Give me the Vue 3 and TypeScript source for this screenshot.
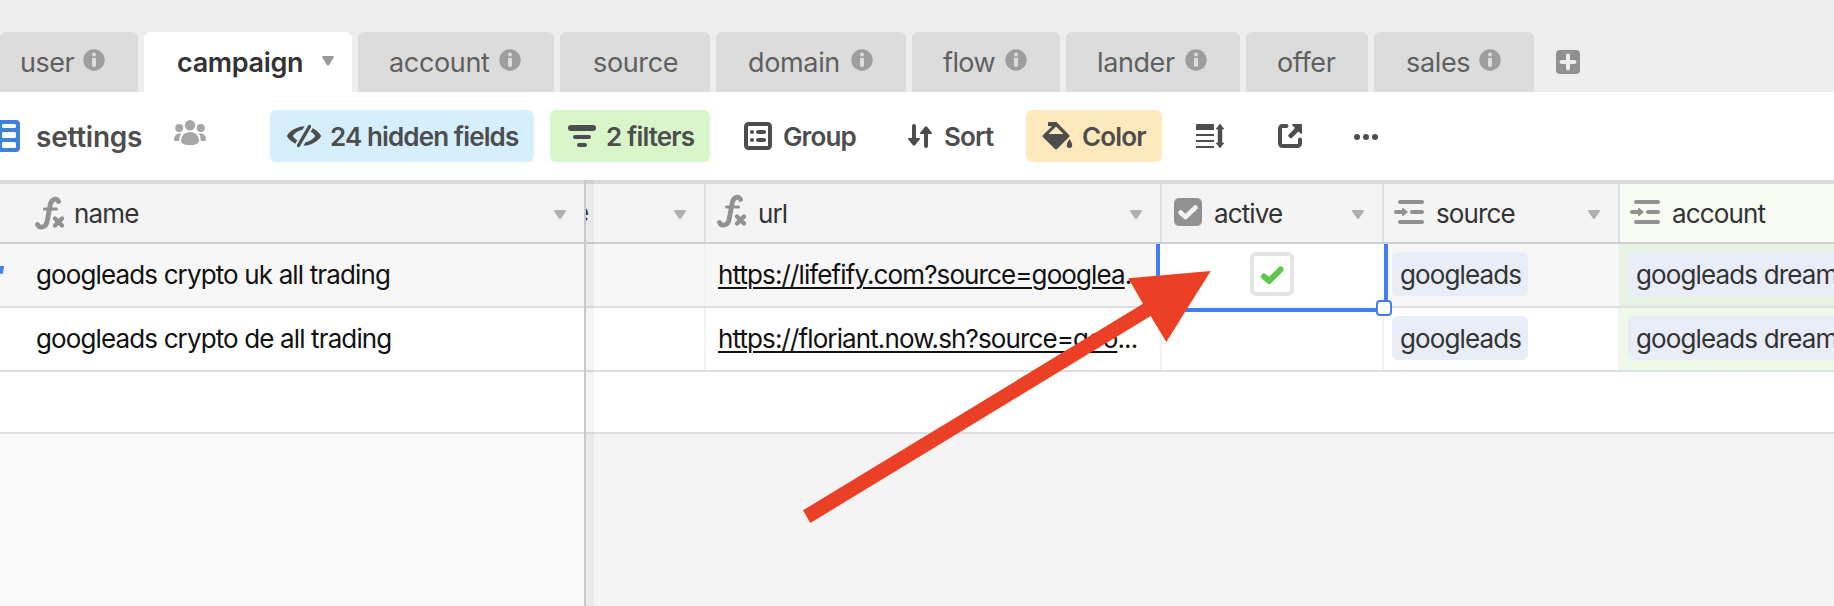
<script setup lang="ts">
interface Tab { name: string; info?: boolean; active?: boolean; cls: string }

const tabs: Tab[] = [
  { name: 'user', info: true, cls: 't-user' },
  { name: 'campaign', active: true, cls: 't-campaign' },
  { name: 'account', info: true, cls: 't-account' },
  { name: 'source', cls: 't-source' },
  { name: 'domain', info: true, cls: 't-domain' },
  { name: 'flow', info: true, cls: 't-flow' },
  { name: 'lander', info: true, cls: 't-lander' },
  { name: 'offer', cls: 't-offer' },
  { name: 'sales', info: true, cls: 't-sales' },
]

interface Row { name: string; url: string; active: boolean; source: string; account: string }

const rows: Row[] = [
  { name: 'googleads crypto uk all trading', url: 'https://lifefify.com?source=googlea', active: true, source: 'googleads', account: 'googleads dream' },
  { name: 'googleads crypto de all trading', url: 'https://floriant.now.sh?source=goo', active: false, source: 'googleads', account: 'googleads dream' },
]
</script>

<template>
  <div class="app">
    <nav class="tabs">
      <div v-for="t in tabs" :key="t.name" class="tab" :class="[t.cls, { current: t.active }]">
        <span class="label">{{ t.name }}</span>
        <svg v-if="t.info" class="info" width="22" height="22" viewBox="0 0 22 22">
          <circle cx="11" cy="11" r="10.7" fill="#9d9d9d" />
          <circle cx="11" cy="5.6" r="2" fill="#dcdcdc" />
          <path d="M9 9h4v8.6h-4z" fill="#dcdcdc" />
        </svg>
        <svg v-if="t.active" class="caret" width="12" height="10" viewBox="0 0 12 10">
          <path d="M1 0h10c.9 0 1.2.8.8 1.500L7 9c-.5.800-1.500.800-2 0L.2 1.500C-.2.800.1 0 1 0z" fill="#999" />
        </svg>
      </div>
      <svg class="plus" width="24" height="24" viewBox="0 0 24 24">
        <rect width="24" height="24" rx="4" fill="#919191" />
        <path d="M12 5.500v13M5.500 12h13" stroke="#eee" stroke-width="4" stroke-linecap="round" />
      </svg>
    </nav>

    <div class="toolbar">
      <svg class="view-icon" width="20" height="32" viewBox="0 0 20 32">
        <path d="M0 0h16a4 4 0 0 1 4 4v24a4 4 0 0 1-4 4H0z" fill="#3b82d8" />
        <rect x="2" y="4" width="14" height="4" rx="1.500" fill="#fff" />
        <rect x="2" y="12" width="14" height="6" rx="1.500" fill="#fff" />
        <rect x="2" y="22" width="14" height="6" rx="1.500" fill="#fff" />
      </svg>
      <span class="view-name">settings</span>
      <svg class="people" width="32" height="26" viewBox="0 0 32 26">
        <g fill="#a6a6a6">
          <circle cx="16" cy="5.200" r="5.200" />
          <circle cx="5.200" cy="8" r="4" />
          <circle cx="26.800" cy="8" r="4" />
          <path d="M16 12c5.600 0 9 4.200 9 8.800 0 3-4 4.400-9 4.400s-9-1.400-9-4.400C7 16.200 10.400 12 16 12z" />
          <path d="M7.400 13.600C5.900 15.700 5.200 18 5.300 21H1.500C.3 21 0 20.200 0 19.300 0 16 2.300 13.500 5 13.500zM24.600 13.600c1.500 2.100 2.200 4.400 2.100 7.400h3.800c1.200 0 1.500-.8 1.500-1.700 0-3.300-2.300-5.800-5-5.800z" />
        </g>
      </svg>

      <div class="btn hidden-btn">
        <svg width="34" height="24" viewBox="0 0 34 24">
          <path d="M22.500 2.500 11.500 21.500" stroke="#4d4d4d" stroke-width="3.400" stroke-linecap="round" />
          <g fill="#4d4d4d">
            <path d="M17.500 2.200C10.500 2.400 3.500 6.400.3 11c-.4.700-.4 1.300 0 2 2 2.800 4.800 5 8 6.700l2-3.500C8.500 15.300 7 14.200 6.200 12.600c-.3-.6-.2-1.200.2-1.700C8.500 8.300 11.500 6.500 15.500 5.700z" />
            <path d="M17.500 2.200C10.500 2.400 3.500 6.400.3 11c-.4.700-.4 1.300 0 2 2 2.800 4.800 5 8 6.700l2-3.500C8.500 15.300 7 14.200 6.200 12.600c-.3-.6-.2-1.200.2-1.700C8.500 8.300 11.500 6.500 15.500 5.700z" transform="rotate(180 17 12)" />
          </g>
        </svg>
        <span>24 hidden fields</span>
      </div>
      <div class="btn filter-btn">
        <svg width="28" height="22" viewBox="0 0 28 22" fill="#4d4d4d">
          <rect width="28" height="6" rx="3" /><rect x="5" y="10" width="18" height="4" rx="2" /><rect x="9" y="18" width="10" height="4" rx="2" />
        </svg>
        <span>2 filters</span>
      </div>
      <div class="btn group-btn">
        <svg width="28" height="28" viewBox="0 0 28 28" fill="#4d4d4d">
          <rect x="2" y="2" width="24" height="24" rx="2.500" fill="none" stroke="#4d4d4d" stroke-width="4" />
          <circle cx="8" cy="10" r="2" /><rect x="12" y="8" width="10" height="4" rx="2" />
          <circle cx="8" cy="18" r="2" /><rect x="12" y="16" width="10" height="4" rx="2" />
        </svg>
        <span>Group</span>
      </div>
      <div class="btn sort-btn">
        <svg width="24" height="24" viewBox="0 0 24 24" fill="#4d4d4d">
          <path d="M4 2a2 2 0 0 1 4 0v12h3c1 0 1.300.800.700 1.600L7.200 21c-.7.900-1.700.900-2.400 0L.3 15.600C-.3 14.800 0 14 1 14h3zM16 22a2 2 0 0 0 4 0V10h3c1 0 1.300-.8.7-1.600L19.200 3c-.7-.9-1.700-.9-2.400 0l-4.500 5.400c-.6.800-.3 1.600.7 1.600h3z" />
        </svg>
        <span>Sort</span>
      </div>
      <div class="btn color-btn">
        <svg width="30" height="28" viewBox="0 0 30 28" fill="#4d4d4d">
          <path fill-rule="evenodd" d="M6 0h7.500L26.300 13.200c.5.500.5 1.100 0 1.600L14 27c-.6.600-1.400.6-2 0L-.1 15c-.5-.5-.5-1.300 0-1.800L9 4.200H7.500L5 4V1a1 1 0 0 1 1-1zM13 4.500 5.500 12h15z" />
          <path d="M26.500 17c1.500 2.400 2.700 4.200 2.700 6.200a2.700 2.700 0 0 1-5.400 0c0-2 1.200-3.800 2.700-6.200z" />
        </svg>
        <span>Color</span>
      </div>
      <svg class="row-height" width="28" height="24" viewBox="0 0 28 24" fill="#4d4d4d">
        <path d="M1 0h16a1 1 0 0 1 1 1v5H0V1a1 1 0 0 1 1-1z" />
        <path d="M0 10h18v2H0zM0 16h18v2H0zM0 22h18v2H0z" />
        <path d="M24 0l4 5h-2v14h2l-4 5-4-5h2V5h-2z" stroke="#4d4d4d" stroke-width=".5" />
      </svg>
      <svg class="share" width="24" height="24" viewBox="0 0 24 24">
        <path d="M8.500 2H4.500A2.500 2.500 0 0 0 2 4.500v15A2.500 2.500 0 0 0 4.500 22h15a2.500 2.500 0 0 0 2.500-2.500V15.500" fill="none" stroke="#4d4d4d" stroke-width="4" stroke-linecap="round" />
        <path d="M14.500 0H23a1 1 0 0 1 1 1v8.500l-1 .5-2.500-2.500L13.500 14.200c-1 .8-4-2-3.200-3.200L17 4l-3-3z" fill="#4d4d4d" />
      </svg>
      <svg class="dots" width="24" height="6" viewBox="0 0 24 6" fill="#4d4d4d">
        <circle cx="3" cy="3" r="3" /><circle cx="12" cy="3" r="3" /><circle cx="21" cy="3" r="3" />
      </svg>
    </div>

    <div class="grid">
      <div class="row head">
        <div class="cell c-name">
          <svg class="fx" width="30" height="34" viewBox="0 0 30 34">
            <path d="M23.500 4.500C22.500 1 16.500 1 15.200 8L12 25c-1.200 6-8 6.500-9.500 2.500" fill="none" stroke="#919191" stroke-width="4.800" stroke-linecap="round" />
            <path d="M9.500 12h12" stroke="#919191" stroke-width="3" stroke-linecap="round" />
            <path d="M20 21.500l7 7M27 21.500l-7 7" stroke="#919191" stroke-width="4.400" stroke-linecap="round" />
          </svg>
          <span class="label">name</span>
          <i class="caret" />
        </div>
        <div class="cell c-part"><span class="cut">e</span><i class="caret" /></div>
        <div class="cell c-url">
          <svg class="fx raised" width="30" height="34" viewBox="0 0 30 34">
            <path d="M23.500 4.500C22.500 1 16.500 1 15.200 8L12 25c-1.200 6-8 6.500-9.500 2.500" fill="none" stroke="#919191" stroke-width="4.800" stroke-linecap="round" />
            <path d="M9.500 12h12" stroke="#919191" stroke-width="3" stroke-linecap="round" />
            <path d="M20 21.500l7 7M27 21.500l-7 7" stroke="#919191" stroke-width="4.400" stroke-linecap="round" />
          </svg>
          <span class="label">url</span>
          <i class="caret" />
        </div>
        <div class="cell c-active">
          <svg class="box" width="28" height="28" viewBox="0 0 28 28">
            <rect width="28" height="28" rx="5" fill="#919191" />
            <path d="M6.500 14.500l5 4.500L21.500 9.500" fill="none" stroke="#f4f4f4" stroke-width="4.600" stroke-linecap="round" stroke-linejoin="round" />
          </svg>
          <span class="label">active</span>
          <i class="caret" />
        </div>
        <div v-for="n in ['source', 'account']" :key="n" class="cell" :class="'c-' + n">
          <svg class="link" width="30" height="24" viewBox="0 0 30 24" fill="#919191">
            <rect x="4" width="26" height="4" rx="2" /><rect x="4" y="20" width="26" height="4" rx="2" />
            <rect x="16" y="10" width="14" height="4" rx="2" />
            <path d="M2 10h6V8.800c0-.8.9-1.200 1.500-.6l4 3.200c.4.400.4.800 0 1.200l-4 3.200c-.6.600-1.500.200-1.500-.6V14H2a2 2 0 0 1 0-4z" />
          </svg>
          <span class="label">{{ n }}</span>
          <i class="caret" />
        </div>
      </div>

      <div v-for="(r, i) in rows" :key="r.name" class="row" :class="{ hover: i === 0 }">
        <div class="cell c-name">
          <svg v-if="i === 0" class="expand" width="4" height="8" viewBox="0 0 4 8"><path d="M0 0h4L3 7.500 0 8z" fill="#3f7ff2" /></svg>
          <span class="text">{{ r.name }}</span>
        </div>
        <div class="cell c-part" />
        <div class="cell c-url"><span class="text"><u>{{ r.url }}</u>{{ '...' }}</span></div>
        <div class="cell c-active">
          <div v-if="r.active" class="selection">
            <svg class="check" width="44" height="44" viewBox="0 0 44 44">
              <rect x="2" y="2" width="40" height="40" rx="4" fill="#fff" stroke="#e5e5e5" stroke-width="4" />
              <path d="M14 24.500l5.200 4.500L30.500 17.500" fill="none" stroke="#5fc74a" stroke-width="6" stroke-linecap="round" stroke-linejoin="round" />
            </svg>
            <span class="handle" />
          </div>
        </div>
        <div class="cell c-source"><span class="pill">{{ r.source }}</span></div>
        <div class="cell c-account"><span class="pill long">{{ r.account }}</span></div>
      </div>
      <div class="add-row" />
      <div class="rest"><div class="rest-left" /></div>
      <div class="divider" />
    </div>

    <svg class="arrow" width="410" height="254" viewBox="0 0 410 254">
      <path d="M408.700 1 326.300 8.300 341 33.700 1 240.300 8.300 253 348.700 46 364.300 72z" fill="#ec4026" />
    </svg>
  </div>
</template>

<style>
body { margin: 0; overflow: hidden; }
</style>

<style scoped>
.app {
  position: relative; width: 1834px; height: 606px; overflow: hidden;
  display: flex; flex-direction: column; background: #fff;
  font-family: Inter, "Liberation Sans", sans-serif; font-size: 26px; line-height: 30px; white-space: nowrap;
}
.app * { box-sizing: border-box; }
svg { flex: none; display: block; overflow: visible; }

.tabs { display: flex; gap: 6px; height: 92px; padding-top: 32px; background: #eee; }
.tab {
  display: flex; align-items: center; flex: none; height: 60px; padding-left: 31px;
  border-radius: 6px 6px 0 0; background: #dcdcdc; color: #606060; font-size: 27px; letter-spacing: -.35px;
}
.tab .label { flex: 1; padding-top: 1px; }
.info { margin: -4px 33px 0 0; }
.t-user { width: 138px; padding-left: 20px; letter-spacing: -.5px; }
.t-campaign { width: 208px; padding-left: 33px; }
.t-account { width: 196px; }
.t-source { width: 150px; padding-left: 33px; }
.t-domain { width: 190px; padding-left: 32px; }
.t-flow { width: 148px; letter-spacing: -.6px; }
.t-lander { width: 174px; letter-spacing: -.4px; }
.t-offer { width: 122px; }
.t-sales { width: 160px; padding-left: 32px; }
.tab.current { background: #fff; color: #333; font-weight: 600; letter-spacing: -.35px; }
.tab .caret { margin: -3px 18px 0 0; }
.plus { margin: 18px 0 0 16px; }

.toolbar { display: flex; align-items: center; height: 88px; color: #4d4d4d; font-weight: 600; letter-spacing: -.85px; }
.toolbar span { padding-top: 2px; }
.view-name { width: 137px; padding-left: 16px; font-size: 28px; letter-spacing: -.25px; }
.people { margin: -6px 64px 0 17px; }
.btn { display: flex; align-items: center; flex: none; height: 52px; border-radius: 6px; }
.hidden-btn { width: 264px; padding-left: 17px; gap: 9px; background: #d6effd; letter-spacing: -.88px; }
.filter-btn { width: 160px; margin-left: 16px; padding-left: 18px; gap: 10px; background: #d8f6c9; }
.group-btn { width: 146px; margin-left: 16px; padding-left: 18px; gap: 11px; }
.sort-btn { width: 110px; margin-left: 20px; padding-left: 16px; gap: 12px; }
.color-btn { width: 136px; margin-left: 24px; padding-left: 17px; gap: 9px; background: #fde9bc; }
.row-height { margin-left: 34px; }
.share { margin-left: 54px; }
.dots { margin: 2px 0 0 52px; }

.grid { position: relative; flex: 1; display: flex; flex-direction: column; border-top: 4px solid #dadada; }
.row {
  display: grid; grid-template-columns: 586px 120px 456px 222px 236px 214px; grid-template-rows: 62px;
  flex: none; height: 64px; border-bottom: 2px solid #dce0e4; color: #111; letter-spacing: -.87px;
}
.head { grid-template-rows: 58px; height: 60px; background: #f4f4f4; border-color: #cfcfcf; color: #333; }
.hover { background: #f7f7f7; }
.cell { display: flex; align-items: center; min-width: 0; border-right: 2px solid #f2f2f2; }
.cell.c-name { border-right: 0; padding-left: 36px; }
.cell.c-account { border-right: 0; background: #eef9e8; overflow: hidden; }
.hover .c-account { background: #e8f2e2; }
.head .cell { border-color: #dcdfe3; }
.head .c-account { background: #f8fbf4; }
.head .label { flex: 1; padding-top: 1px; }
.head .c-name { padding-left: 35px; }
.fx { margin: 2px 9px 0 0; }
.fx.raised { margin: -2px 11px 0 0; }
.row .c-url { padding-left: 12px; letter-spacing: -.89px; }
.head .c-url { padding-left: 11px; }
.head .c-active { padding-left: 12px; }
.box { margin: -2px 12px 0 0; }
.link { margin: -2px 12px 0 10px; }
.head .caret {
  width: 12px; height: 9px; margin: 3px 18px 0 0; background: #b0b0b0;
  clip-path: polygon(4% 0, 96% 0, 100% 14%, 58% 94%, 50% 100%, 42% 94%, 0 14%);
}
.head .c-name .caret { margin-right: 20px; }
.head .c-account .caret { visibility: hidden; }
.cut { flex: 1; text-indent: -12px; overflow: hidden; }
.expand { margin: -10px 32px 0 -36px; }
u { text-decoration-thickness: 2px; text-underline-offset: 3px; }
.selection {
  position: relative; z-index: 1; display: flex; align-items: flex-start; justify-content: center; flex: none;
  align-self: flex-start; width: 232px; height: 68px; margin-left: -6px; padding-top: 8px; background: #fff;
  border: 4px solid #3f7ff2; border-top: 0;
}
.handle {
  position: absolute; right: -8px; bottom: -8px; width: 16px; height: 16px;
  border: 2px solid #3f7ff2; border-radius: 4px; background: #fff;
}
.pill {
  align-self: flex-start; height: 44px; margin: 8px 0 0 8px; padding: 0 8px;
  border-radius: 6px; background: #e8edf8; color: #333; line-height: 45px;
}
.c-source .pill { width: 136px; }
.pill.long { flex: none; width: 260px; }
.add-row { flex: none; height: 62px; border-bottom: 2px solid #dce0e4; }
.rest { flex: 1; background: #f4f4f4; }
.rest-left { width: 584px; height: 100%; background: #f9f9f9; }
.divider {
  position: absolute; top: -4px; bottom: 0; left: 584px; width: 10px;
  border-left: 2px solid #c9c9c9; background: rgba(0, 0, 0, .04);
}
.arrow { position: absolute; left: 802px; top: 270px; z-index: 3; }
</style>
